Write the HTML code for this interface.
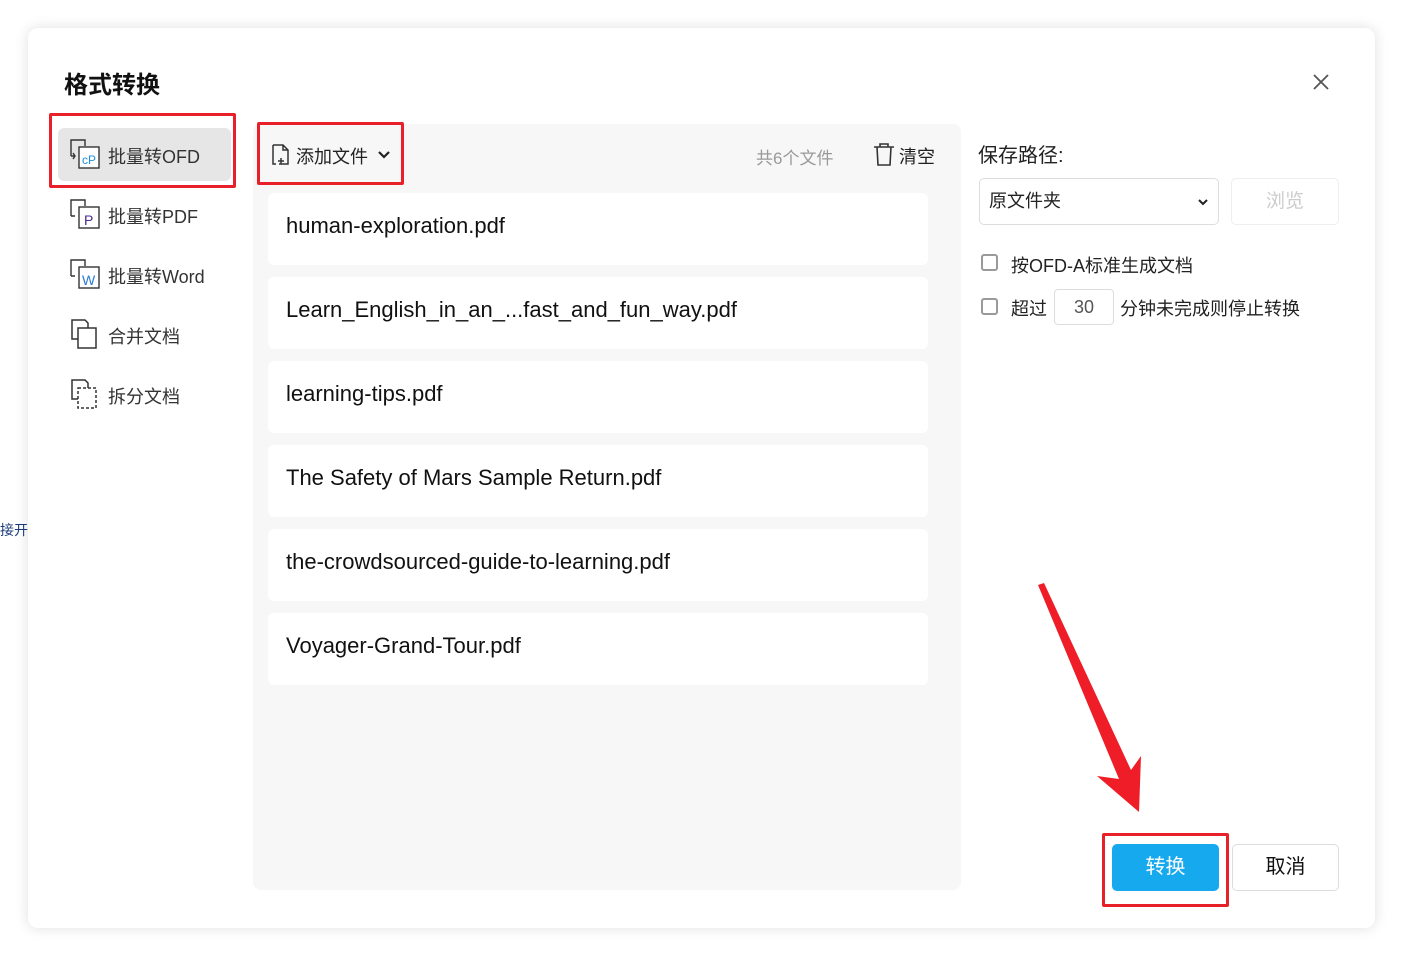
<!DOCTYPE html><html><head><meta charset="utf-8"><style>
body{margin:0;width:1403px;height:956px;background:#fff;position:relative;overflow:hidden;font-family:"Liberation Sans","Noto Sans CJK SC",sans-serif;color:#222}
.a{position:absolute}
.dlg{left:28px;top:28px;width:1347px;height:900px;background:#fff;border-radius:10px;box-shadow:0 0 14px rgba(0,0,0,.13)}
.red{border:3px solid #e8202a;border-radius:2px;box-sizing:border-box}
.mi{left:70px;font-size:18px;color:#333}
.row{left:268px;width:660px;height:72px;background:#fff;border-radius:6px;font-size:22px;line-height:66px;padding-left:18px;box-sizing:border-box;color:#111}
.cb{width:17px;height:17px;border:2px solid #9a9a9a;border-radius:3px;box-sizing:border-box}
</style></head><body>
<div class="a" style="left:0;top:520px;font-size:14px;color:#1a3a7a">接开</div>
<div class="a dlg"></div>
<div class="a" style="left:64px;top:65px;font-size:24px;font-weight:bold;color:#111">格式转换</div>
<svg class="a" style="left:1311px;top:72px" width="20" height="20"><path d="M3 3L17 17M17 3L3 17" stroke="#555" stroke-width="1.8"/></svg>
<div class="a" style="left:58px;top:128px;width:173px;height:53px;background:#e6e6e6;border-radius:6px"></div>
<div class="a red" style="left:49px;top:113px;width:187px;height:75px"></div>
<svg class="a" style="left:68px;top:138px" width="34" height="32"><path d="M3 18V2h14v6M3 18h4M5 15l2 3-2 3" stroke="#333" stroke-width="1.4" fill="none"/><rect x="11" y="9" width="20" height="21" fill="#fff" stroke="#333" stroke-width="1.4"/><text x="14" y="26" font-size="12" fill="#1e8ed8">cP</text></svg>
<div class="a mi" style="left:108px;top:143px">批量转OFD</div>
<svg class="a" style="left:68px;top:198px" width="34" height="32"><path d="M3 18V2h14v6M3 18h4" stroke="#333" stroke-width="1.4" fill="none"/><rect x="11" y="9" width="20" height="21" fill="#fff" stroke="#333" stroke-width="1.4"/><text x="16" y="27" font-size="14" fill="#4a2a8a">P</text></svg>
<div class="a mi" style="left:108px;top:203px">批量转PDF</div>
<svg class="a" style="left:68px;top:258px" width="34" height="32"><path d="M3 18V2h14v6M3 18h4" stroke="#333" stroke-width="1.4" fill="none"/><rect x="11" y="9" width="20" height="21" fill="#fff" stroke="#333" stroke-width="1.4"/><text x="14" y="27" font-size="14" fill="#2a7ad8">W</text></svg>
<div class="a mi" style="left:108px;top:263px">批量转Word</div>
<svg class="a" style="left:68px;top:318px" width="34" height="34"><path d="M4 2h13l3 3v16H4z" stroke="#333" stroke-width="1.5" fill="none"/><rect x="10" y="10" width="18" height="20" fill="#fff" stroke="#333" stroke-width="1.5"/></svg>
<div class="a mi" style="left:108px;top:323px">合并文档</div>
<svg class="a" style="left:68px;top:378px" width="34" height="34"><path d="M4 2h13l3 3v16H4z" stroke="#333" stroke-width="1.5" fill="none"/><rect x="10" y="10" width="18" height="20" fill="#fff" stroke="#333" stroke-width="1.5" stroke-dasharray="3 2"/></svg>
<div class="a mi" style="left:108px;top:383px">拆分文档</div>
<div class="a" style="left:253px;top:124px;width:708px;height:766px;background:#f7f7f7;border-radius:8px"></div>
<div class="a red" style="left:257px;top:122px;width:147px;height:63px"></div>
<svg class="a" style="left:270px;top:143px" width="22" height="24"><path d="M3 2h10l5 5v14H9M3 2v19h3M13 2v5h5M11 15v6M8 18h6" stroke="#333" stroke-width="1.5" fill="none"/></svg>
<div class="a" style="left:296px;top:143px;font-size:18px;color:#222">添加文件</div>
<svg class="a" style="left:377px;top:150px" width="14" height="10"><path d="M2 2l5 5 5-5" stroke="#222" stroke-width="2.2" fill="none"/></svg>
<div class="a" style="left:756px;top:144px;font-size:17px;color:#999">共6个文件</div>
<svg class="a" style="left:872px;top:142px" width="24" height="26"><path d="M2 5h20M8 5V2h8v3M5 5l1 18h12l1-18" stroke="#333" stroke-width="1.6" fill="none"/></svg>
<div class="a" style="left:899px;top:143px;font-size:18px">清空</div>
<div class="a row" style="top:193px">human-exploration.pdf</div>
<div class="a row" style="top:277px">Learn_English_in_an_...fast_and_fun_way.pdf</div>
<div class="a row" style="top:361px">learning-tips.pdf</div>
<div class="a row" style="top:445px">The Safety of Mars Sample Return.pdf</div>
<div class="a row" style="top:529px">the-crowdsourced-guide-to-learning.pdf</div>
<div class="a row" style="top:613px">Voyager-Grand-Tour.pdf</div>
<div class="a" style="left:978px;top:139px;font-size:20px">保存路径:</div>
<div class="a" style="left:979px;top:178px;width:240px;height:47px;border:1px solid #ddd;border-radius:5px;box-sizing:border-box;font-size:18px;line-height:45px;padding-left:9px">原文件夹</div>
<svg class="a" style="left:1197px;top:198px" width="12" height="8"><path d="M2 2l4 4 4-4" stroke="#222" stroke-width="2" fill="none"/></svg>
<div class="a" style="left:1231px;top:178px;width:108px;height:47px;border:1px solid #eee;border-radius:5px;box-sizing:border-box;font-size:19px;line-height:45px;text-align:center;color:#ccc">浏览</div>
<div class="a cb" style="left:981px;top:254px"></div>
<div class="a" style="left:1011px;top:252px;font-size:18px">按OFD-A标准生成文档</div>
<div class="a cb" style="left:981px;top:298px"></div>
<div class="a" style="left:1011px;top:295px;font-size:18px">超过</div>
<div class="a" style="left:1054px;top:289px;width:60px;height:36px;border:1px solid #ddd;border-radius:4px;box-sizing:border-box;font-size:18px;line-height:34px;text-align:center;color:#555">30</div>
<div class="a" style="left:1120px;top:295px;font-size:18px">分钟未完成则停止转换</div>
<svg class="a" style="left:1030px;top:575px" width="120" height="245"><polygon points="8,10 14,8 101,195 111,181 109,237 67,201 89,204" fill="#ee1d27"/></svg>
<div class="a red" style="left:1102px;top:833px;width:127px;height:74px"></div>
<div class="a" style="left:1112px;top:844px;width:107px;height:47px;background:#17a9ee;border-radius:5px;color:#fff;font-size:20px;line-height:47px;text-align:center">转换</div>
<div class="a" style="left:1232px;top:844px;width:107px;height:47px;border:1px solid #ddd;border-radius:5px;box-sizing:border-box;font-size:20px;line-height:45px;text-align:center;color:#111">取消</div>
</body></html>
